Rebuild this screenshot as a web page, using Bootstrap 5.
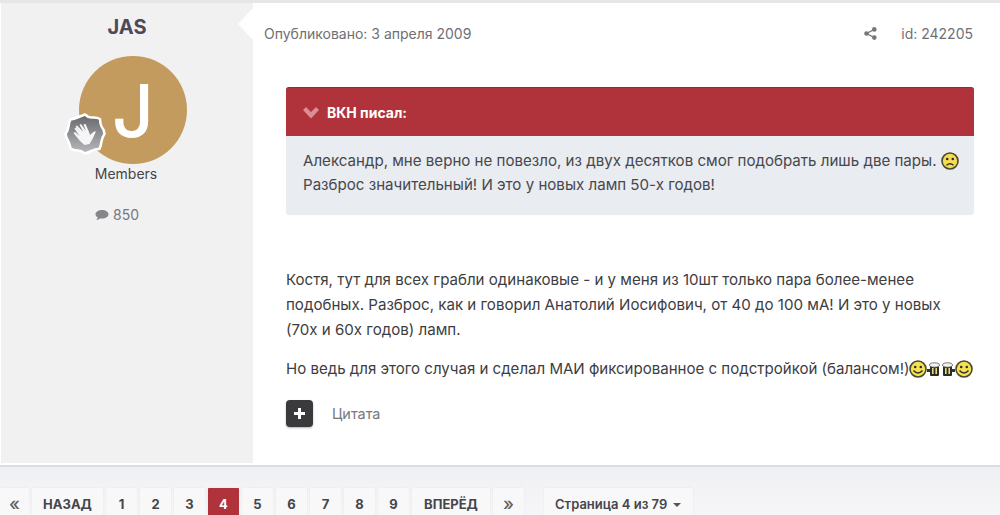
<!DOCTYPE html>
<html lang="ru">
<head>
  <meta charset="UTF-8" />
  <title>Сообщение</title>
  <link href="https://cdn.jsdelivr.net/npm/bootstrap@5.3.3/dist/css/bootstrap.min.css" rel="stylesheet" />
  <style>
    html, body { height: 515px; overflow: hidden; }
    body { font-family: Inter, "Liberation Sans", sans-serif; font-size: 14px; color: #3d3d3f; background: #fff; }
    .post-wrap { border-top: 3px solid #e6e6e8; height: 465px; padding-left: 1px; padding-bottom: 2px; }
    .author-col { width: 252px; flex: none; background: #f1f1f2; position: relative; padding-top: 12px; }
    .author-col::after {
      content: ""; position: absolute; right: 0; top: 5px;
      border-style: solid; border-width: 16px 15px 16px 0;
      border-color: transparent #fff transparent transparent;
    }
    .author-name { font-size: 20px; line-height: 24px; font-weight: 700; color: #4c4a5a; margin: 0; }
    .avatar-box { position: relative; width: 108px; height: 108px; margin: 17px auto 0; left: 6px; }
    .avatar-round { width: 108px; height: 108px; border-radius: 50%; background: #c39b5f; color: #fff; font-size: 73px; font-weight: 500; line-height: 110px; text-align: center; }
    .rank-badge { position: absolute; left: -16px; top: 56px; width: 44px; height: 44px; }
    .group-name { font-size: 14px; line-height: 20px; color: #45454a; padding-right: 2px; }
    .post-count { font-size: 14px; line-height: 20px; margin-top: 21px; color: #77777c; padding-right: 20px; }
    .post-main { padding: 0 26px 0 11px; min-width: 0; flex-grow: 1; }
    .post-meta { height: 60px; color: #6f6f74; font-size: 14px; padding: 1px 1px 0 0; }
    .meta-right { gap: 24px; }
    .quote-box { margin: 24px 0 0 22px; background: #e9ecf1; border-radius: 3px; border: 0; box-shadow: 0 1px 1px rgba(0,0,0,.08); }
    .quote-head { background: #b0323a; color: #fff; font-weight: 700; font-size: 14px; height: 49px; padding-left: 17px; border-radius: 3px 3px 0 0; gap: 8px; border-top: 1px solid #8f2d34; }
    .quote-body { padding: 13px 0 17px 17px; line-height: 24px; font-size: 15.1px; color: #47474c; }
    .post-text { margin: 53px 0 0 22px; line-height: 25px; font-size: 15.1px; color: #3d3d3f; }
    .post-text p { margin-bottom: 14px; }
    .post-text .last-line { font-size: 15.05px; }
    .smile { vertical-align: -4px; }
    .mug-gap { width: 2px; }
    .post-foot { margin: 19px 0 0 22px; gap: 19px; }
    .plus-btn { width: 27px; height: 27px; background: #3a3a3c; border-radius: 4px; box-shadow: 0 1px 2px rgba(0,0,0,.3); color: #fff; padding: 0; border: 0; }
    .quote-link { color: #77777c; font-size: 14.4px; }
    .pager-bar { height: 50px; border-top: 2px solid #dcdde0; background: linear-gradient(#eff0f3, #f6f6f8); padding-top: 21px; gap: 20px; overflow: hidden; }
    .pager-bar .pagination { gap: 3px; margin: 0; --bs-pagination-border-width: 0; }
    .pager-bar .page-item .page-link {
      background: #f8f8f9; color: #45454c; font-weight: 700; font-size: 13px; height: 40px; line-height: 16px; margin-left: 0;
      padding: 8px 0; width: 31px; text-align: center; border-radius: 1px; box-shadow: 0 0 1px rgba(0,0,0,.2);
    }
    .pager-bar .page-item .page-first { width: 29px; }
    .pager-bar .page-item .page-back { width: 71px; }
    .pager-bar .page-item .page-next { width: 78px; }
    .pager-bar .page-item.active .page-link { background: #b0323a; color: #fff; }
    .pager-bar .page-item .page-arrow { font-weight: 500; color: #606066; font-size: 18px; line-height: 15px; }
    .jump-btn { background: #f8f8f9; color: #45454c; font-weight: 600; font-size: 13px; height: 40px; line-height: 16px; padding: 8px 11px; width: 149px; border: 0; border-radius: 1px; box-shadow: 0 0 1px rgba(0,0,0,.2); display: inline-block; white-space: nowrap; }
    .jump-btn.dropdown-toggle::after { vertical-align: 2px; margin-left: 6px; border-top-width: 4px; border-left-width: 4px; border-right-width: 4px; color: #55555a; }
  </style>
</head>
<body>

  <div class="post-wrap d-flex">
    <!-- author -->
    <div class="author-col text-center">
      <h3 class="author-name">JAS</h3>
      <div class="avatar-box">
        <div class="avatar-round">J</div>
        <svg class="rank-badge" viewBox="0 0 44 44">
          <defs>
            <linearGradient id="badgeFill" x1="0" y1="0" x2="0" y2="1">
              <stop offset="0" stop-color="#66676b" />
              <stop offset="1" stop-color="#b8b9bc" />
            </linearGradient>
          </defs>
          <path d="M22 2.500Q25.500 6 29.500 5.500Q33.500 5 37 7Q37 11 38.500 14.500Q41.500 18 41.500 22Q39 25.500 38.500 29.500Q38 33.500 36.500 37Q33 36.500 29.500 38.500Q26 40 22 41.500Q18.500 38.500 14.500 38.500Q10.500 38.500 7.500 36.500Q7 33 5.500 29.500Q3 26 2.500 22Q5 18.500 5.500 14.500Q6 10.500 7.500 7.500Q11 7 14.500 5.500Q18 4 22 2.500Z" fill="url(#badgeFill)" stroke="#fff" stroke-width="2.500" stroke-linejoin="round" />
          <path d="M14 13.500 20.500 20 16.500 13 18 12 23 19 20.500 12.500 22.500 12 26 20 27 23 31 19.500 33 19.500 30 26 26.500 32 21.500 33 17 29 10.500 21 12 20 16.500 24 11.500 16.500 13 15.500 18 21 12.500 14.500Z" fill="#f6f6f6" />
        </svg>
      </div>
      <div class="group-name">Members</div>
      <div class="post-count d-flex justify-content-center align-items-center gap-1">
        <svg width="14" height="13" viewBox="0 0 14 13"><path d="M7 1C3.400 1 .5 2.900.5 5.300c0 1.300.9 2.500 2.300 3.300-.2.9-.7 1.700-1.400 2.400 1.300-.1 2.600-.7 3.600-1.600.6.1 1.300.2 2 .2 3.600 0 6.500-1.900 6.500-4.300S10.600 1 7 1z" fill="#85858a" /></svg>
        <span>850</span>
      </div>
    </div>

    <!-- post -->
    <div class="post-main">
      <div class="post-meta d-flex justify-content-between align-items-center">
        <span>Опубликовано: 3 апреля 2009</span>
        <div class="meta-right d-flex align-items-center">
          <svg width="13" height="13" viewBox="0 0 13 13" fill="#77777c"><circle cx="10.300" cy="2.400" r="2.300" /><circle cx="2.500" cy="6.500" r="2.300" /><circle cx="10.300" cy="10.600" r="2.300" /><path d="M2.500 6.500 10.300 2.400M2.500 6.500l7.800 4.100" stroke="#77777c" stroke-width="1.300" /></svg>
          <span>id: 242205</span>
        </div>
      </div>

      <div class="quote-box card">
        <div class="quote-head d-flex align-items-center">
          <svg width="16" height="13" viewBox="0 0 16 13"><path d="M0 4 3 1 8 6 13 1 16 4 8 12.500Z" fill="#d98f94" /></svg>
          <span>ВКН писал:</span>
        </div>
        <div class="quote-body">
          <span class="text-nowrap">Александр, мне верно не повезло, из двух десятков смог подобрать лишь две пары.
          <svg class="smile" width="18" height="18" viewBox="0 0 18 18"><circle cx="9" cy="9" r="8" fill="#f4dc55" stroke="#4d4830" stroke-width="1.600" /><circle cx="6.200" cy="7" r="1.300" fill="#2e2e2a" /><circle cx="11.800" cy="7" r="1.300" fill="#2e2e2a" /><path d="M5.500 13.200q3.500-3 7 0" fill="none" stroke="#2e2e2a" stroke-width="1.400" /></svg></span><br />
          Разброс значительный! И это у новых ламп 50-х годов!
        </div>
      </div>

      <div class="post-text">
        <p>Костя, тут для всех грабли одинаковые - и у меня из 10шт только пара более-менее подобных. Разброс, как и говорил Анатолий Иосифович, от 40 до 100 мА! И это у новых<br />(70х и 60х годов) ламп.</p>
        <p class="last-line text-nowrap">Но ведь для этого случая и сделал МАИ фиксированное с подстройкой (балансом!)<svg class="smile" width="18" height="18" viewBox="0 0 18 18"><circle cx="9" cy="9" r="8" fill="#f4e250" stroke="#4d4830" stroke-width="1.600" /><circle cx="6.200" cy="7" r="1.300" fill="#2e2e2a" /><circle cx="11.800" cy="7" r="1.300" fill="#2e2e2a" /><path d="M4.500 10.500q4.500 5 9 0" fill="none" stroke="#2e2e2a" stroke-width="1.400" /></svg><svg class="smile" width="13" height="16" viewBox="0 0 13 16"><rect x="0" y="7" width="4" height="3" fill="#333" /><rect x="3" y="3" width="9" height="11" rx="1" fill="#2c2c20" /><rect x="5" y="6" width="1.600" height="6" fill="#e8d98a" /><rect x="8.400" y="6" width="1.600" height="6" fill="#e8d98a" /><ellipse cx="7.500" cy="3" rx="5" ry="2.200" fill="#f3f3ee" stroke="#555" stroke-width=".8" /></svg><span class="mug-gap d-inline-block"></span><svg class="smile" width="13" height="16" viewBox="0 0 13 16"><rect x="9" y="7" width="4" height="3" fill="#333" /><rect x="1" y="3" width="9" height="11" rx="1" fill="#2c2c20" /><rect x="3" y="6" width="1.600" height="6" fill="#e8d98a" /><rect x="6.400" y="6" width="1.600" height="6" fill="#e8d98a" /><ellipse cx="5.500" cy="3" rx="5" ry="2.200" fill="#f3f3ee" stroke="#555" stroke-width=".8" /></svg><svg class="smile" width="18" height="18" viewBox="0 0 18 18"><circle cx="9" cy="9" r="8" fill="#f4e250" stroke="#4d4830" stroke-width="1.600" /><circle cx="6.200" cy="7" r="1.300" fill="#2e2e2a" /><circle cx="11.800" cy="7" r="1.300" fill="#2e2e2a" /><path d="M4.500 10.500q4.500 5 9 0" fill="none" stroke="#2e2e2a" stroke-width="1.400" /></svg></p>
      </div>

      <div class="post-foot d-flex align-items-center">
        <button class="plus-btn btn d-flex align-items-center justify-content-center" type="button" aria-label="Добавить">
          <svg width="11" height="11" viewBox="0 0 11 11"><path d="M4 0h3v4h4v3H7v4H4V7H0V4h4z" fill="#fff" /></svg>
        </button>
        <span class="quote-link">Цитата</span>
      </div>
    </div>
  </div>

  <!-- pagination -->
  <div class="pager-bar d-flex">
    <ul class="pagination">
      <li class="page-item"><a class="page-link page-arrow page-first" href="#">«</a></li>
      <li class="page-item"><a class="page-link page-back" href="#">НАЗАД</a></li>
      <li class="page-item"><a class="page-link" href="#">1</a></li>
      <li class="page-item"><a class="page-link" href="#">2</a></li>
      <li class="page-item"><a class="page-link" href="#">3</a></li>
      <li class="page-item active"><a class="page-link" href="#">4</a></li>
      <li class="page-item"><a class="page-link" href="#">5</a></li>
      <li class="page-item"><a class="page-link" href="#">6</a></li>
      <li class="page-item"><a class="page-link" href="#">7</a></li>
      <li class="page-item"><a class="page-link" href="#">8</a></li>
      <li class="page-item"><a class="page-link" href="#">9</a></li>
      <li class="page-item"><a class="page-link page-next" href="#">ВПЕРЁД</a></li>
      <li class="page-item"><a class="page-link page-arrow" href="#">»</a></li>
    </ul>
    <a class="jump-btn dropdown-toggle text-decoration-none" href="#">Страница 4 из 79</a>
  </div>

  <script src="https://cdn.jsdelivr.net/npm/bootstrap@5.3.3/dist/js/bootstrap.bundle.min.js"></script>
</body>
</html>
